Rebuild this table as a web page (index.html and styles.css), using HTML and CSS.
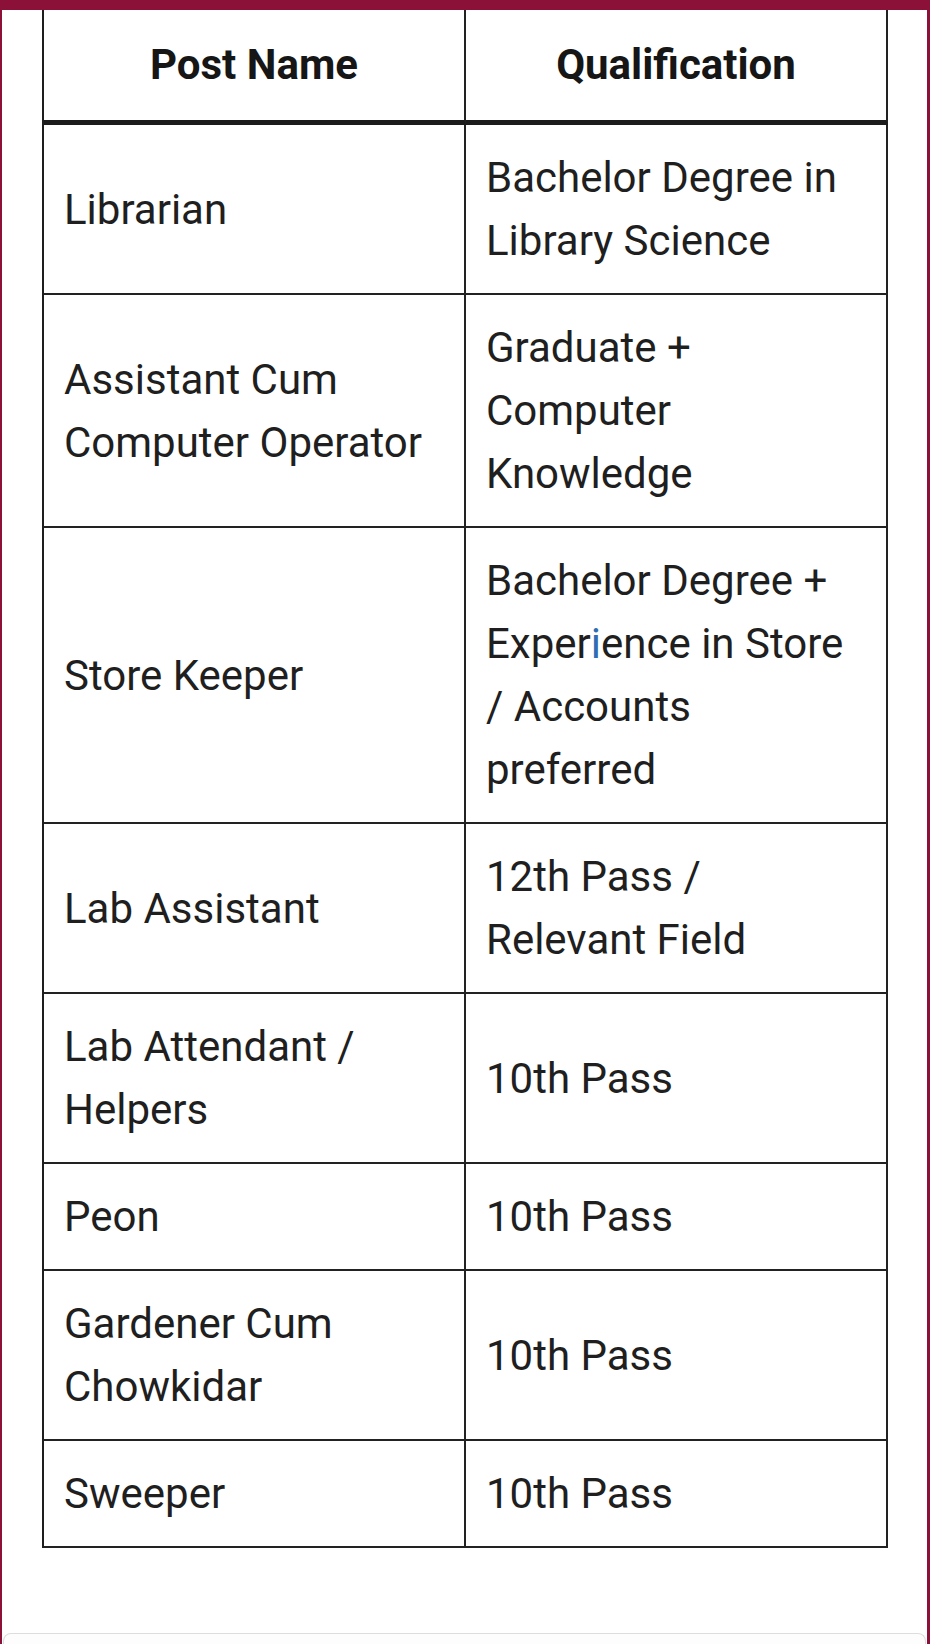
FILE: index.html
```html
<!DOCTYPE html>
<html lang="en">
<head>
<meta charset="utf-8">
<title>Post Name and Qualification</title>
<link rel="stylesheet" href="styles.css">
</head>
<body>
<div class="frame">
  <div class="content">
    <table class="posts">
      <colgroup><col class="col-half"><col class="col-half"></colgroup>
      <thead>
        <tr><th>Post Name</th><th>Qualification</th></tr>
      </thead>
      <tbody>
        <tr><td>Librarian</td><td>Bachelor Degree in Library Science</td></tr>
        <tr><td>Assistant Cum Computer Operator</td><td>Graduate + Computer Knowledge</td></tr>
        <tr><td>Store Keeper</td><td>Bachelor Degree + Exper<span class="cursor">i</span>ence in Store / Accounts preferred</td></tr>
        <tr><td>Lab Assistant</td><td>12th Pass / Relevant Field</td></tr>
        <tr><td>Lab Attendant / Helpers</td><td>10th Pass</td></tr>
        <tr><td>Peon</td><td>10th Pass</td></tr>
        <tr><td>Gardener Cum Chowkidar</td><td>10th Pass</td></tr>
        <tr><td>Sweeper</td><td>10th Pass</td></tr>
      </tbody>
    </table>
    <div class="next-card"></div>
  </div>
</div>
</body>
</html>
```
FILE: styles.css
```css
html, body {
  margin: 0;
  padding: 0;
  background: #ffffff;
}

body {
  font-family: Roboto, "Liberation Sans", sans-serif;
  color: #1f1f1f;
}

.frame {
  box-sizing: border-box;
  min-height: 1644px;
  border-top: 10px solid #8b1139;
  border-left: 2px solid #8b1139;
  border-right: 3px solid #8b1139;
  overflow: hidden;
}

.content {
  padding: 0 39px 0 40px;
}

.posts {
  width: 846px;
  table-layout: fixed;
  border-collapse: separate;
  border-spacing: 0;
  border-left: 2px solid #1e1e1e;
}

.col-half {
  width: 50%;
}

.posts th,
.posts td {
  border-right: 2px solid #222222;
  border-bottom: 2px solid #222222;
  font-size: 42px;
  line-height: 63px;
  vertical-align: middle;
}

.posts th {
  font-weight: 700;
  color: #161616;
  text-align: center;
  padding: 23px 20px 24px;
  border-bottom: 5px solid #1c1c1c;
}

.posts td {
  font-weight: 400;
  text-align: left;
  padding: 21px 32px 21px 20px;
}

.cursor {
  color: #2f6db3;
}

.next-card {
  margin: 85px -38px 0 -39px;
  height: 40px;
  border: 1px solid #dddddd;
  border-bottom: none;
  border-radius: 8px 8px 0 0;
  background: #fdfdfd;
}
```
